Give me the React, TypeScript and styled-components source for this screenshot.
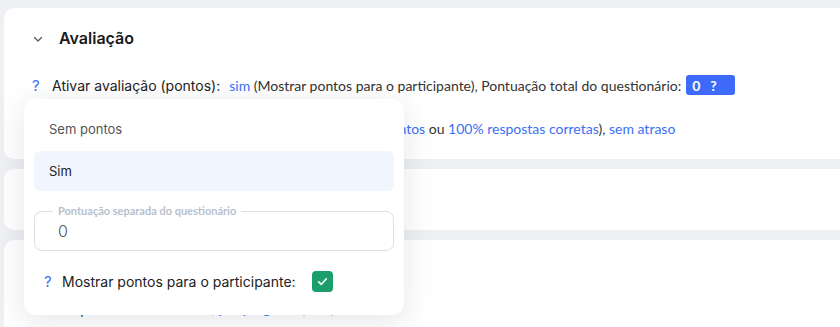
import { FC } from 'react';
import styled, { createGlobalStyle } from 'styled-components';

const GlobalStyle = createGlobalStyle`
  html, body {
    margin: 0;
    background: #eef0f3;
    font-family: 'Inter', 'Noto Sans', sans-serif;
    color: #222;
  }
`;

const ChevronIcon: FC = () => (
  <svg width="12" height="12" viewBox="0 0 12 12" fill="none">
    <path d="M2.5 4.5 6 8l3.5-3.5" stroke="#555" strokeWidth="1.2" strokeLinecap="round" strokeLinejoin="round" />
  </svg>
);

const CheckIcon: FC = () => (
  <svg width="13" height="13" viewBox="0 0 12 12" fill="none">
    <path d="M2.4 6.3 4.9 8.6l4.7-5.1" stroke="#fff" strokeWidth="1.5" strokeLinecap="round" strokeLinejoin="round" />
  </svg>
);

const App: FC = () => {
  return (
    <Page>
      <GlobalStyle />
      <Card $height={151}>
        <CardHeader>
          <ChevronIcon />
          <h2>Avaliação</h2>
        </CardHeader>
        <Row>
          <Help>?</Help>
          <Label>Ativar avaliação (pontos):</Label>
          <Value>
            <Link>sim</Link> (Mostrar pontos para o participante), Pontuação total do questionário:
          </Value>
          <Badge>
            0 <span>?</span>
          </Badge>
        </Row>
        <Row>
          <Help>?</Help>
          <Label>Critérios para aprovação:</Label>
          <Value>
            sim (Mínimo de <Link>50% dos pontos</Link> ou <Link>100% respostas corretas</Link>),{' '}
            <Link>sem atraso</Link>
          </Value>
        </Row>
      </Card>
      <Card $height={61} />
      <Card $height={100}>
        <Row $top={53}>
          <Help>?</Help>
          <Label>Tempo limite:</Label>
          <Value $muted>
            sem limite, <Link>por pergunta</Link> (livre)
          </Value>
        </Row>
      </Card>

      <Dropdown>
        <Option>Sem pontos</Option>
        <Option $active>Sim</Option>
        <Field>
          <FieldLabel>Pontuação separada do questionário</FieldLabel>
          <FieldValue>0</FieldValue>
        </Field>
        <CheckRow>
          <Help>?</Help>
          <CheckLabel>Mostrar pontos para o participante:</CheckLabel>
          <Checkbox>
            <CheckIcon />
          </Checkbox>
        </CheckRow>
      </Dropdown>
    </Page>
  );
};

const Page = styled.div`
  position: relative;
  height: 327px;
  overflow: hidden;
  padding: 8px 0 0 4px;
  box-sizing: border-box;
  display: flex;
  flex-direction: column;
  gap: 10px;
`;

const Card = styled.div<{ $height: number }>`
  flex: none;
  height: ${({ $height }) => $height}px;
  background: #fff;
  border-radius: 10px 0 0 10px;
  padding: 0 0 0 28px;
  box-sizing: border-box;
`;

const CardHeader = styled.div`
  display: flex;
  align-items: center;
  gap: 15px;
  height: 62px;
  padding-bottom: 3px;
  box-sizing: border-box;

  svg {
    margin-top: 2px;
  }

  h2 {
    margin: 0;
    font-size: 16px;
    font-weight: 600;
    color: #1a1a1a;
  }
`;

const Row = styled.div<{ $top?: number }>`
  display: flex;
  align-items: center;
  height: 30px;
  margin-top: ${({ $top }) => $top ?? 0}px;
  margin-bottom: 13px;
  font-size: 14px;
  white-space: nowrap;
`;

const Help = styled.span`
  color: #3b6ff5;
  font-size: 15px;
  width: 20px;
  flex: none;
`;

const Label = styled.span`
  font-family: 'Inter', sans-serif;
  font-size: 14px;
  color: #222;
  margin-right: 9px;
`;

const Value = styled.span<{ $muted?: boolean }>`
  font-family: 'Lato', sans-serif;
  font-size: 14px;
  color: ${({ $muted }) => ($muted ? '#999' : '#333')};
`;

const Link = styled.span`
  color: #3b6ff5;
`;

const Badge = styled.span`
  display: flex;
  align-items: center;
  gap: 10px;
  margin-left: 5px;
  width: 49px;
  height: 20px;
  padding-left: 6px;
  box-sizing: border-box;
  background: #3d6af8;
  border-radius: 3px;
  color: #fff;
  font-family: 'Lato', sans-serif;
  font-weight: 700;
  font-size: 14px;
`;

const Dropdown = styled.div`
  position: absolute;
  left: 24px;
  top: 99px;
  width: 380px;
  height: 216px;
  box-sizing: border-box;
  padding: 10px;
  background: #fff;
  border-radius: 12px;
  box-shadow: 0 6px 30px rgba(30, 40, 60, 0.12);
  display: flex;
  flex-direction: column;
  gap: 2px;
`;

const Option = styled.div<{ $active?: boolean }>`
  height: 40px;
  flex: none;
  display: flex;
  align-items: center;
  padding-left: 15px;
  border-radius: 6px;
  font-size: 13px;
  color: ${({ $active }) => ($active ? '#222' : '#555')};
  background: ${({ $active }) => ($active ? '#f0f5fe' : 'transparent')};
`;

const Field = styled.div`
  position: relative;
  flex: none;
  margin-top: 18px;
  height: 40px;
  box-sizing: border-box;
  border: 1px solid #dcdde6;
  border-radius: 8px;
  padding-left: 23px;
  display: flex;
  align-items: center;
`;

const FieldLabel = styled.span`
  position: absolute;
  left: 18px;
  top: -8px;
  padding: 0 5px;
  background: #fff;
  line-height: 14px;
  font-family: 'Lato', sans-serif;
  font-size: 11px;
  font-weight: 700;
  color: #b7bfcd;
`;

const FieldValue = styled.span`
  font-size: 16px;
  font-weight: 300;
  color: #555;
`;

const CheckRow = styled.div`
  display: flex;
  align-items: center;
  height: 21px;
  flex: none;
  margin-top: 18px;
  padding-left: 10px;

  ${Help} {
    width: 18px;
  }
`;

const CheckLabel = styled.span`
  font-size: 14px;
  color: #222;
  margin-right: 16px;
`;

const Checkbox = styled.span`
  width: 21px;
  height: 21px;
  border-radius: 4px;
  background: #1a9e6a;
  display: grid;
  place-items: center;
`;

export default App;
